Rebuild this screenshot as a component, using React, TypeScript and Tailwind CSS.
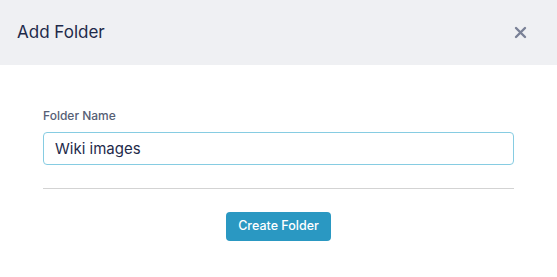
import React, { useState } from "react";

export default function App() {
  const [name, setName] = useState("Wiki images");

  return (
    <div
      className="w-[557px] h-[277px] bg-white"
      style={{ fontFamily: "Inter, 'Noto Sans', sans-serif" }}
    >
      <div className="h-[65px] bg-[#eff0f3] flex items-center justify-between pl-[17px] pr-[30px]">
        <h2 className="text-[17px] text-[#1e2a4a] font-normal">Add Folder</h2>
        <button className="text-[#7a8196]">
          <svg width="13" height="13" viewBox="0 0 13 13" fill="none">
            <path
              d="M2 2L11 11M11 2L2 11"
              stroke="currentColor"
              strokeWidth="2.4"
              strokeLinecap="round"
            />
          </svg>
        </button>
      </div>

      <form className="px-[43px] pt-[42px]" onSubmit={(e) => e.preventDefault()}>
        <label
          htmlFor="folderName"
          className="block text-[12px] font-medium text-[#566075] mb-[7px]"
        >
          Folder Name
        </label>
        <input
          id="folderName"
          type="text"
          value={name}
          onChange={(e) => setName(e.target.value)}
          className="w-full h-[33px] px-[11px] rounded-[4px] border-[1.5px] border-[#86cce2] text-[15px] text-[#1e2a4a] outline-none"
        />
        <div className="mt-[23px] border-t border-[#d3d3d3]" />
        <div className="flex justify-center mt-[23px]">
          <button
            type="submit"
            className="h-[29px] px-[12px] rounded-[4px] bg-[#2a98c2] text-white text-[12.5px] font-medium"
          >
            Create Folder
          </button>
        </div>
      </form>
    </div>
  );
}
